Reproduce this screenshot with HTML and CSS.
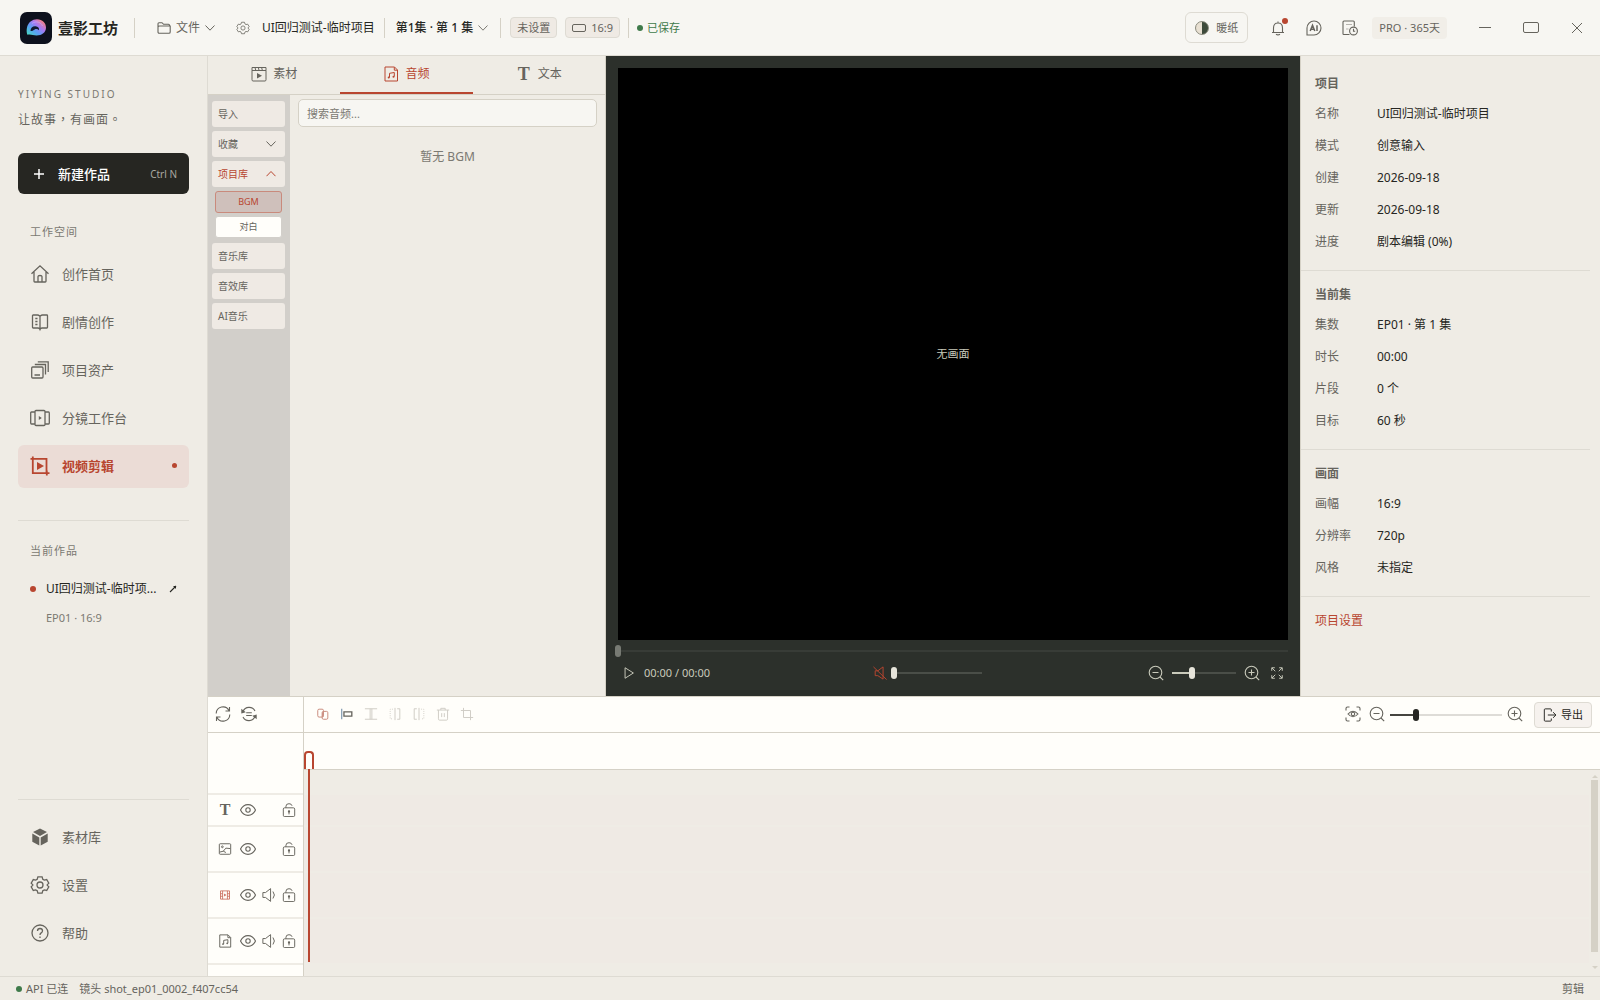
FILE: index.html
```html
<!DOCTYPE html>
<html lang="zh-CN">
<head>
    <meta charset="UTF-8">
    <meta name="viewport" content="width=device-width, initial-scale=1.0">
    <title>壹影工坊</title>
    <link rel="stylesheet" href="styles.css">
</head>
<body>
    <!-- 图标 -->
    <svg class="sprite" aria-hidden="true">
        <symbol id="i-down" viewBox="0 0 10 10"><path d="M0.5 2.5 5 7.2 9.5 2.5"/></symbol>
        <symbol id="i-up" viewBox="0 0 10 10"><path d="M0.5 7.2 5 2.5 9.5 7.2"/></symbol>
        <symbol id="i-folder" viewBox="0 0 14 14"><path d="M1 11V2.8Q1 1.7 2 1.7H5L6.6 3.3H11.5Q12.5 3.3 12.5 4.3V5M2.5 5H13.2V11Q13.2 12.3 12 12.3H2.2Q1 12.3 1 11V6.2Q1 5 2.5 5Z"/></symbol>
        <symbol id="i-gear" viewBox="0 0 20 20"><path d="M7.9 1.8h4.2l.7 2.4 1.5.9 2.4-.6 2.1 3.6-1.7 1.8v.2l1.7 1.8-2.1 3.6-2.4-.6-1.5.9-.7 2.4H7.9l-.7-2.4-1.5-.9-2.4.6-2.1-3.6 1.7-1.8v-.2L1.2 8.1l2.1-3.6 2.4.6 1.5-.9z"/><circle cx="10" cy="10" r="3"/></symbol>
        <symbol id="i-bell" viewBox="0 0 16 16"><path d="M2 12.5H14M3.5 12.5V8Q3.5 3 8 3T12.5 8V12.5M8 3V1.500M6 14.2Q8 15.500 10 14.2"/></symbol>
        <symbol id="i-ai" viewBox="0 0 16 16"><path d="M1 15V8A7 7 0 1 1 8 15Z"/><path class="heavy" d="M4.2 11 6.5 5.2 8.8 11M5 9.3H8M11 5.2V11"/></symbol>
        <symbol id="i-docclock" viewBox="0 0 16 16"><path d="M7.5 14.5H1.7Q1 14.5 1 13.8V2Q1 1 2 1H11.3Q12.3 1 12.3 2V6.500"/><path opacity=".45" d="M4 4.5H10M4 9H6.500"/><circle cx="11.5" cy="11" r="3.9"/><path d="M11.5 8.8V11.3H13.2"/></symbol>
        <symbol id="i-home" viewBox="0 0 20 20"><path d="M1.5 9.7 10 1.8 18.5 9.7M4 8V17.2Q4 18 4.8 18H15.2Q16 18 16 17.2V8M8 18V12.5Q8 11.5 10 11.5T12 12.5V18"/></symbol>
        <symbol id="i-book" viewBox="0 0 20 20"><path d="M10 4.2V17.8M10 4.2Q8.5 3 7.5 3H3.2Q2.5 3 2.5 3.7V15.3Q2.5 16 3.2 16H8Q9.5 16.2 10 17.5 10.5 16.2 12 16H16.8Q17.5 16 17.5 15.3V3.7Q17.5 3 16.8 3H12.5Q11.5 3 10 4.2M5.3 6.5H7.5M5.3 9.5H7.5M5.3 12.5H7.5"/></symbol>
        <symbol id="i-stack" viewBox="0 0 20 20"><path d="M1.7 8Q1.7 7 2.7 7H12Q13 7 13 8V17Q13 18 12 18H2.7Q1.7 18 1.7 17ZM4.5 15H10M4.8 4.5H15.5V14.5M7.8 1.8H18.2V12"/></symbol>
        <symbol id="i-board" viewBox="0 0 20 20"><path d="M5 3.5Q5 2.5 6 2.5H14Q15 2.5 15 3.5V16.5Q15 17.5 14 17.5H6Q5 17.5 5 16.5ZM5 4H1.5Q.7 4 .7 5V15Q.7 16 1.5 16H5M15 4H18.5Q19.3 4 19.3 5V15Q19.3 16 18.5 16H15"/><path class="solid" d="M8.8 8 11.8 10 8.8 12Z"/></symbol>
        <symbol id="i-edit" viewBox="0 0 20 20"><path d="M.5 2.8H16.5V16.8M2.8 .5V17.2H19.5M16.8 14.5V19.5"/><path class="solid" d="M7 6V14L14 10Z"/></symbol>
        <symbol id="i-cube" viewBox="0 0 20 20"><path class="solid" d="M10 1.5 17 5 10 9 3 5ZM2.3 6.500 9.3 10.5V18.5L2.3 14.8ZM17.7 6.5 10.7 10.5V18.5L17.7 14.8Z"/></symbol>
        <symbol id="i-help" viewBox="0 0 20 20"><circle cx="10" cy="10" r="8"/><path d="M7.5 8Q7.5 5.5 10 5.5T12.5 7.8Q12.5 9.2 11.2 9.9 10 10.6 10 12M10 13.5V15"/></symbol>
        <symbol id="i-clip" viewBox="0 0 16 16"><path d="M1 4.5V13.7Q1 15 2 15H14Q15 15 15 13.7V4.5ZM1 4.5V1.5H15V4.5M4 1.5 4.8 4.5M7.3 1.5 8.1 4.5M10.6 1.5 11.4 4.5"/><path class="solid" d="M6 7 11 9.7 6 12.4Z"/></symbol>
        <symbol id="i-music" viewBox="0 0 16 16"><path d="M2 1H11.5L14.5 4V15H2ZM11.3 1.2V4.2H14.3M6.5 11.5V7.3L11.3 6.5V10.5"/><circle class="solid" cx="5.7" cy="11.5" r="1"/><circle class="solid" cx="10.5" cy="10.7" r="1"/></symbol>
        <symbol id="i-play" viewBox="0 0 16 16"><path d="M3.5 2V14L13 8Z"/></symbol>
        <symbol id="i-mute" viewBox="0 0 16 16"><path d="M2.5 5.5V11H5.5L11.5 15V1L5.5 5.5ZM.5 1 15.5 15.5"/></symbol>
        <symbol id="i-minus" viewBox="0 0 16 16"><circle cx="7.5" cy="7.5" r="6.3"/><path d="M4.5 7.5H10.5M12 12 15.2 15.2"/></symbol>
        <symbol id="i-plus" viewBox="0 0 16 16"><circle cx="7.5" cy="7.5" r="6.3"/><path d="M4.5 7.5H10.5M7.5 4.5V10.5M12 12 15.2 15.2"/></symbol>
        <symbol id="i-full" viewBox="0 0 16 16"><path d="M2 5.5V2H5.5M2.2 2.2 6 6M10.5 2H14V5.5M13.8 2.2 10 6M2 10.5V14H5.5M2.2 13.8 6 10M14 10.5V14H10.5M13.8 13.8 10 10"/></symbol>
        <symbol id="i-refresh" viewBox="0 0 16 16"><path d="M1.2 7.5A6.8 6.8 0 0 1 14 4.5M14.5 1V5H10.5M14.8 8.5A6.8 6.8 0 0 1 2 11.5M1.5 15V11H5.5"/></symbol>
        <symbol id="i-sync" viewBox="0 0 16 16"><path d="M2 5.5A6.6 6.6 0 0 1 14 5M14 10.5A6.6 6.6 0 0 1 2 11M5.2 6.8H10.8M5.2 9.5H10.8"/><path class="solid" d="M.3 2.8 4.8 6.300 .3 7.5ZM15.7 13.2 11.2 9.7 15.7 8.5Z"/></symbol>
        <symbol id="i-link" viewBox="0 0 16 16"><rect x="2" y="2.5" width="6.5" height="9" rx="1.5"/><rect x="7" y="5" width="6.5" height="9" rx="1.5"/><path class="heavy" d="M7.8 6V11"/></symbol>
        <symbol id="i-align" viewBox="0 0 16 16"><path stroke="#5f7f9c" d="M2 2V14"/><path class="heavy" d="M4.5 5.5H13.5V10.5H4.5Z"/></symbol>
        <symbol id="i-split" viewBox="0 0 16 16"><path d="M1 2H15M1 14H15M7 2V14M9 2V14"/></symbol>
        <symbol id="i-cutl" viewBox="0 0 16 16"><path d="M10.5 2H13.5V14H10.5M8 1V15"/><path stroke-dasharray="1 1.5" d="M5.5 2.5H2.5V13.5H5.5"/></symbol>
        <symbol id="i-cutr" viewBox="0 0 16 16"><path d="M5.5 2H2.5V14H5.5M8 1V15"/><path stroke-dasharray="1 1.5" d="M10.5 2.5H13.5V13.5H10.5"/></symbol>
        <symbol id="i-trash" viewBox="0 0 16 16"><path d="M1 3.5H15M5.5 3.5V1.5H10.5V3.5M2.8 3.5V13.5Q2.8 15 4 15H12Q13.2 15 13.2 13.5V3.5M6.5 7V11.5M9.5 7V11.5"/></symbol>
        <symbol id="i-crop" viewBox="0 0 16 16"><path d="M1 4H12V15M4 1V12H15"/></symbol>
        <symbol id="i-focus" viewBox="0 0 16 16"><path d="M1 4.5V2.5Q1 1 2.5 1H4.5M11.5 1H13.5Q15 1 15 2.5V4.5M15 11.5V13.5Q15 15 13.5 15H11.5M4.5 15H2.5Q1 15 1 13.5V11.5M3 8Q8 2.500 13 8 8 13.5 3 8Z"/><circle cx="8" cy="8" r="1.7"/></symbol>
        <symbol id="i-export" viewBox="0 0 16 16"><path d="M9.5 4V2Q9.5 1 8.5 1H2.5Q1.5 1 1.5 2V14Q1.5 15 2.5 15H8.5Q9.5 15 9.5 14V12M5.5 8H14.8M11.5 4.8 14.8 8 11.5 11.2"/></symbol>
        <symbol id="i-eye" viewBox="0 0 16 16"><path d="M.5 8C4 .8 12 .8 15.5 8 12 15.2 4 15.2 .5 8Z"/><circle cx="8" cy="8" r="2.2"/></symbol>
        <symbol id="i-sound" viewBox="0 0 16 16"><path d="M1 5.2V10.800H4L9.800 15.300V.7L4 5.2ZM12.500 4Q15.800 8 12.500 12"/></symbol>
        <symbol id="i-lock" viewBox="0 0 16 16"><rect x="1.5" y="5.500" width="13" height="10" rx="1.5"/><path d="M4.5 5.5V3.8Q4.5.8 8 .8 11 .8 11.500 3.2M8 9V13"/><circle class="solid" cx="8" cy="9.7" r="1.3"/></symbol>
        <symbol id="i-image" viewBox="0 0 16 16"><rect x="1.5" y="2" width="13" height="12" rx="1"/><path d="M2 11.5 6 10.5 9 7 14 7.5M6 10.5 9 12"/><circle cx="5" cy="5.5" r="1"/></symbol>
        <symbol id="i-film" viewBox="0 0 16 16"><path d="M2 2.500H14V13.500H2ZM4.8 2.500V13.500M11.2 2.500V13.500M2 6.3H4.8M2 9.7H4.8M11.2 6.3H14M11.2 9.7H14"/><path class="solid" d="M6.8 6 9.8 8 6.8 10Z"/></symbol>
    </svg>

    <!-- 顶栏 -->
    <header class="topbar">
        <div class="brand">
            <svg class="logo" viewBox="0 0 32 32" aria-hidden="true">
                <defs>
                    <linearGradient id="ring" x1="0" y1="1" x2="1" y2="0">
                        <stop offset="0" stop-color="#43e0b8"/>
                        <stop offset=".35" stop-color="#5aa0f5"/>
                        <stop offset=".6" stop-color="#a879f2"/>
                        <stop offset=".85" stop-color="#f0808c"/>
                        <stop offset="1" stop-color="#e85a4a"/>
                    </linearGradient>
                </defs>
                <rect width="32" height="32" rx="7" fill="#0d111d"/>
                <path fill="url(#ring)" d="M7.500 22.800C5.500 18 7 7.500 17 7.200c5.500 0 9 3.800 9 8.300 0 4.800-4 8-9.500 8-3.500 0-5.500-1.500-9 -.700Z"/>
                <path fill="#101830" d="M10.500 19c0-3.500 2.200-5 5-4.800 2.600.2 4 1.800 3.500 4-1.300-1.300-2.800-1.500-4.300-.800-1.200.600-2.200 1.800-4.200 1.600Z"/>
                <path fill="none" stroke="#c9b6ff" stroke-width=".8" opacity=".7" d="M12 11.500C16 8.500 21 10 22.500 14"/>
            </svg>
            <span>壹影工坊</span>
        </div>
        <span class="divider"></span>
        <button type="button" class="plain file-menu"><svg class="icon s14"><use href="#i-folder"/></svg>文件<svg class="icon s10"><use href="#i-down"/></svg></button>
        <button type="button" class="plain" aria-label="项目设置"><svg class="icon s14"><use href="#i-gear"/></svg></button>
        <span class="project-name">UI回归测试-临时项目</span>
        <span class="divider"></span>
        <button type="button" class="plain episode">第1集 · 第 1 集<svg class="icon s10"><use href="#i-down"/></svg></button>
        <span class="divider"></span>
        <button type="button" class="tag">未设置</button>
        <button type="button" class="tag last"><span class="ratio"></span>16:9</button>
        <span class="divider tight"></span>
        <span class="saved"><i class="dot green"></i>已保存</span>

        <div class="topbar-right">
            <button type="button" class="theme"><i class="half"></i>暖纸</button>
            <button type="button" class="plain bell" aria-label="通知"><svg class="icon s16"><use href="#i-bell"/></svg><i class="badge"></i></button>
            <button type="button" class="plain" aria-label="AI"><svg class="icon s16"><use href="#i-ai"/></svg></button>
            <button type="button" class="plain" aria-label="任务记录"><svg class="icon s16"><use href="#i-docclock"/></svg></button>
            <span class="pro">PRO · 365天</span>
            <button type="button" class="plain win" aria-label="最小化"><i class="win-min"></i></button>
            <button type="button" class="plain win" aria-label="最大化"><i class="win-max"></i></button>
            <button type="button" class="plain win" aria-label="关闭"><svg class="icon s10" viewBox="0 0 10 10"><path d="M0 0 10 10M10 0 0 10"/></svg></button>
        </div>
    </header>

    <div class="layout">
        <!-- 侧栏 -->
        <aside class="sidebar">
            <div class="studio">YIYING STUDIO</div>
            <div class="slogan" lang="zh-TW">让故事，有画面。</div>
            <button type="button" class="new-work"><svg class="icon s12" viewBox="0 0 12 12"><path d="M6 1V11M1 6H11"/></svg>新建作品<kbd>Ctrl N</kbd></button>

            <div class="side-title">工作空间</div>
            <nav class="nav">
                <a href="#"><svg class="icon s20"><use href="#i-home"/></svg>创作首页</a>
                <a href="#"><svg class="icon s20"><use href="#i-book"/></svg>剧情创作</a>
                <a href="#"><svg class="icon s20"><use href="#i-stack"/></svg>项目资产</a>
                <a href="#"><svg class="icon s20"><use href="#i-board"/></svg>分镜工作台</a>
                <a href="#" class="active"><svg class="icon s20"><use href="#i-edit"/></svg>视频剪辑<i class="dot"></i></a>
            </nav>

            <div class="current">
                <div class="side-title">当前作品</div>
                <a href="#" class="current-work" title="UI回归测试-临时项目"><i class="dot"></i><span>UI回归测试-临时项...</span><svg class="icon s8" viewBox="0 0 8 8"><path d="M1 7 7 1"/><path class="solid" d="M4 1H7V4Z"/></svg></a>
                <div class="current-meta">EP01 · 16:9</div>
            </div>

            <nav class="nav nav-bottom">
                <a href="#"><svg class="icon s20"><use href="#i-cube"/></svg>素材库</a>
                <a href="#"><svg class="icon s20"><use href="#i-gear"/></svg>设置</a>
                <a href="#"><svg class="icon s20"><use href="#i-help"/></svg>帮助</a>
            </nav>
        </aside>

        <main class="workspace">
            <div class="upper">
                <!-- 素材面板 -->
                <section class="library">
                    <div class="tabs">
                        <button type="button"><svg class="icon s16"><use href="#i-clip"/></svg>素材</button>
                        <button type="button" class="active"><svg class="icon s16"><use href="#i-music"/></svg>音频</button>
                        <button type="button"><b class="letter">T</b>文本</button>
                    </div>
                    <div class="library-body">
                        <div class="cats">
                            <button type="button" class="cat">导入</button>
                            <button type="button" class="cat">收藏<svg class="icon s10"><use href="#i-down"/></svg></button>
                            <button type="button" class="cat active">项目库<svg class="icon s10"><use href="#i-up"/></svg></button>
                            <div class="subcats">
                                <button type="button" class="active">BGM</button>
                                <button type="button">对白</button>
                            </div>
                            <button type="button" class="cat">音乐库</button>
                            <button type="button" class="cat">音效库</button>
                            <button type="button" class="cat">AI音乐</button>
                        </div>
                        <div class="assets">
                            <input type="text" class="search" placeholder="搜索音频..." aria-label="搜索音频">
                            <p class="empty">暂无 BGM</p>
                        </div>
                    </div>
                </section>

                <!-- 预览 -->
                <section class="preview">
                    <div class="screen">无画面</div>
                    <input type="range" class="seek" min="0" max="100" value="0" aria-label="播放进度">
                    <div class="controls">
                        <div class="ctl">
                            <button type="button" class="plain" aria-label="播放"><svg class="icon s14"><use href="#i-play"/></svg></button>
                            <span class="time">00:00 / 00:00</span>
                        </div>
                        <div class="ctl volume">
                            <button type="button" class="plain muted" aria-label="静音"><svg class="icon s14"><use href="#i-mute"/></svg></button>
                            <input type="range" min="0" max="100" value="0" aria-label="音量">
                        </div>
                        <div class="ctl zoom">
                            <button type="button" class="plain" aria-label="缩小"><svg class="icon s16"><use href="#i-minus"/></svg></button>
                            <input type="range" min="0" max="100" value="32" aria-label="画面缩放">
                            <button type="button" class="plain" aria-label="放大"><svg class="icon s16"><use href="#i-plus"/></svg></button>
                            <button type="button" class="plain" aria-label="全屏"><svg class="icon s14"><use href="#i-full"/></svg></button>
                        </div>
                    </div>
                </section>

                <!-- 项目信息 -->
                <aside class="inspector">
                    <section>
                        <h2>项目</h2>
                        <dl>
                            <dt>名称</dt><dd>UI回归测试-临时项目</dd>
                            <dt>模式</dt><dd>创意输入</dd>
                            <dt>创建</dt><dd>2026-09-18</dd>
                            <dt>更新</dt><dd>2026-09-18</dd>
                            <dt>进度</dt><dd>剧本编辑 (0%)</dd>
                        </dl>
                    </section>
                    <section>
                        <h2>当前集</h2>
                        <dl>
                            <dt>集数</dt><dd>EP01 · 第 1 集</dd>
                            <dt>时长</dt><dd>00:00</dd>
                            <dt>片段</dt><dd>0 个</dd>
                            <dt>目标</dt><dd>60 秒</dd>
                        </dl>
                    </section>
                    <section>
                        <h2>画面</h2>
                        <dl>
                            <dt>画幅</dt><dd>16:9</dd>
                            <dt>分辨率</dt><dd>720p</dd>
                            <dt>风格</dt><dd>未指定</dd>
                        </dl>
                    </section>
                    <a href="#" class="settings-link">项目设置</a>
                </aside>
            </div>

            <!-- 时间线 -->
            <section class="timeline">
                <div class="toolbar">
                    <div class="tools-left">
                        <button type="button" class="plain" aria-label="刷新"><svg class="icon s16"><use href="#i-refresh"/></svg></button>
                        <button type="button" class="plain" aria-label="同步"><svg class="icon s16"><use href="#i-sync"/></svg></button>
                    </div>
                    <div class="tools">
                        <button type="button" class="plain linked" aria-label="联动"><svg class="icon s14"><use href="#i-link"/></svg></button>
                        <button type="button" class="plain" aria-label="吸附"><svg class="icon s14"><use href="#i-align"/></svg></button>
                        <button type="button" class="plain" disabled aria-label="分割"><svg class="icon s14"><use href="#i-split"/></svg></button>
                        <button type="button" class="plain" disabled aria-label="向左裁剪"><svg class="icon s14"><use href="#i-cutl"/></svg></button>
                        <button type="button" class="plain" disabled aria-label="向右裁剪"><svg class="icon s14"><use href="#i-cutr"/></svg></button>
                        <button type="button" class="plain" disabled aria-label="删除"><svg class="icon s14"><use href="#i-trash"/></svg></button>
                        <button type="button" class="plain" disabled aria-label="裁切"><svg class="icon s14"><use href="#i-crop"/></svg></button>
                    </div>
                    <div class="tools-right">
                        <button type="button" class="plain" aria-label="定位"><svg class="icon s16"><use href="#i-focus"/></svg></button>
                        <button type="button" class="plain" aria-label="缩小时间线"><svg class="icon s16"><use href="#i-minus"/></svg></button>
                        <input type="range" min="0" max="100" value="23" aria-label="时间线缩放">
                        <button type="button" class="plain" aria-label="放大时间线"><svg class="icon s16"><use href="#i-plus"/></svg></button>
                        <button type="button" class="export"><svg class="icon s14"><use href="#i-export"/></svg>导出</button>
                    </div>
                </div>
                <div class="tracks">
                    <div class="heads">
                        <div class="heads-top"></div>
                        <div class="head short">
                            <b class="letter">T</b>
                            <button type="button" class="plain" aria-label="显示"><svg class="icon s16"><use href="#i-eye"/></svg></button>
                            <span></span>
                            <button type="button" class="plain" aria-label="锁定"><svg class="icon s14"><use href="#i-lock"/></svg></button>
                        </div>
                        <div class="head">
                            <svg class="icon s14"><use href="#i-image"/></svg>
                            <button type="button" class="plain" aria-label="显示"><svg class="icon s16"><use href="#i-eye"/></svg></button>
                            <span></span>
                            <button type="button" class="plain" aria-label="锁定"><svg class="icon s14"><use href="#i-lock"/></svg></button>
                        </div>
                        <div class="head">
                            <svg class="icon s12 red"><use href="#i-film"/></svg>
                            <button type="button" class="plain" aria-label="显示"><svg class="icon s16"><use href="#i-eye"/></svg></button>
                            <button type="button" class="plain" aria-label="静音"><svg class="icon s14"><use href="#i-sound"/></svg></button>
                            <button type="button" class="plain" aria-label="锁定"><svg class="icon s14"><use href="#i-lock"/></svg></button>
                        </div>
                        <div class="head">
                            <svg class="icon s14"><use href="#i-music"/></svg>
                            <button type="button" class="plain" aria-label="显示"><svg class="icon s16"><use href="#i-eye"/></svg></button>
                            <button type="button" class="plain" aria-label="静音"><svg class="icon s14"><use href="#i-sound"/></svg></button>
                            <button type="button" class="plain" aria-label="锁定"><svg class="icon s14"><use href="#i-lock"/></svg></button>
                        </div>
                    </div>
                    <div class="canvas">
                        <div class="ruler"></div>
                        <div class="lanes-row">
                            <div class="lanes">
                                <div class="lane short"></div>
                                <div class="lane"></div>
                                <div class="lane"></div>
                                <div class="lane"></div>
                            </div>
                            <div class="scrollbar">
                                <i class="arrow-up"></i>
                                <i class="thumb"></i>
                                <i class="arrow-down"></i>
                            </div>
                        </div>
                        <div class="playhead"></div>
                    </div>
                </div>
            </section>
        </main>
    </div>

    <!-- 状态栏 -->
    <footer class="statusbar">
        <span><i class="dot green"></i>API 已连</span>
        <span>镜头 shot_ep01_0002_f407cc54</span>
        <span class="mode">剪辑</span>
    </footer>
</body>
</html>
```
FILE: styles.css
```css
:root {
    --paper: #efece5;
    --light: #f7f6f2;
    --white: #fffefa;
    --soft: #efeae4;
    --line: #dedbd3;
    --line-dark: #d5d1c6;
    --ink: #262622;
    --text: #66645d;
    --muted: #7b7972;
    --red: #b84630;
    --green: #3f7a4a;
}

* {
    box-sizing: border-box;
}

body {
    margin: 0;
    height: 100vh;
    display: flex;
    flex-direction: column;
    overflow: hidden;
    background: var(--paper);
    color: var(--text);
    font-family: "Noto Sans", "Noto Sans CJK SC", sans-serif;
    font-size: 12px;
    line-height: 20px;
}

button, input {
    font: inherit;
    color: inherit;
}

button {
    display: flex;
    align-items: center;
    padding: 0;
    cursor: pointer;
    white-space: nowrap;
}

a {
    color: inherit;
    text-decoration: none;
}

.plain {
    border: none;
    background: none;
}

/* 图标 */
.sprite {
    position: absolute;
    width: 0;
    height: 0;
}

.icon {
    flex: none;
    fill: none;
    stroke: currentColor;
    stroke-width: 1.1;
    overflow: visible;
}

.solid {
    fill: currentColor;
    stroke: none;
}

.heavy {
    stroke-width: 1.5;
}

.s8 { width: 8px; height: 8px; }
.s10 { width: 10px; height: 10px; stroke-width: 1; }
.s12 { width: 12px; height: 12px; }
.s14 { width: 14px; height: 14px; }
.s16 { width: 16px; height: 16px; }
.s20 { width: 20px; height: 20px; stroke-width: 1.3; }

.red { color: #c96a58; }

.dot {
    flex: none;
    width: 6px;
    height: 6px;
    border-radius: 50%;
    background: var(--red);
}

.dot.green {
    background: var(--green);
}

.letter {
    width: 16px;
    font-family: "Liberation Serif", serif;
    font-size: 18px;
    text-align: center;
}

/* 顶栏 */
.topbar {
    flex: none;
    height: 56px;
    display: flex;
    align-items: center;
    padding: 0 15px 0 20px;
    background: var(--light);
    border-bottom: 1px solid var(--line);
}

.brand {
    display: flex;
    align-items: center;
    gap: 6px;
    color: var(--ink);
    font-size: 15px;
    font-weight: 600;
}

.logo {
    width: 32px;
    height: 32px;
}

.divider {
    width: 1px;
    height: 20px;
    margin: 0 11px 0 9px;
    background: var(--line-dark);
}

.divider.tight {
    margin: 0 8px;
}

.brand + .divider {
    margin: 0 22px 0 16px;
}

.file-menu {
    gap: 5px;
    margin-right: 21px;
}

.project-name {
    margin-left: 12px;
    color: var(--ink);
}

.episode {
    gap: 5px;
    margin-right: 3px;
    color: var(--ink);
    font-weight: 500;
}

.episode .icon {
    color: var(--muted);
}

.tag {
    height: 21px;
    margin-right: 8px;
    padding: 0 6px;
    gap: 5px;
    border: 1px solid var(--line);
    border-radius: 4px;
    background: var(--soft);
    font-size: 11px;
}

.divider + .tag {
    margin-left: -2px;
}

.tag.last {
    margin-right: 0;
}

.ratio {
    width: 14px;
    height: 8px;
    border: 1px solid var(--text);
    border-radius: 2px;
}

.saved {
    display: flex;
    align-items: center;
    gap: 4px;
    color: var(--green);
    font-size: 11px;
}

.topbar-right {
    display: flex;
    align-items: center;
    margin-left: auto;
    gap: 20px;
}

.theme {
    height: 31px;
    padding: 0 9px;
    gap: 7px;
    border: 1px solid var(--line);
    border-radius: 6px;
    background: none;
    font-size: 11px;
}

.half {
    width: 14px;
    height: 14px;
    border: 1px solid #8a8a7c;
    border-radius: 50%;
    background: linear-gradient(90deg, #e8e0d2 50%, #3d4a3a 50%);
}

.bell {
    position: relative;
    margin-left: 2px;
}

.badge {
    position: absolute;
    top: -2px;
    right: -2px;
    width: 6px;
    height: 6px;
    border-radius: 50%;
    background: var(--red);
}

.pro {
    margin: 0 0 0 -6px;
    padding: 1px 7px;
    border-radius: 4px;
    background: #f1eee8;
    font-size: 11px;
}

.win {
    width: 16px;
    height: 16px;
    margin-left: 10px;
    justify-content: center;
}

.win-min {
    width: 12px;
    height: 1px;
    background: var(--text);
}

.win-max {
    width: 16px;
    height: 11px;
    border: 1px solid var(--text);
    border-radius: 2px;
}

.layout {
    flex: 1;
    min-height: 0;
    display: flex;
}

/* 侧栏 */
.sidebar {
    flex: none;
    width: 208px;
    display: flex;
    flex-direction: column;
    padding: 28px 18px 21px;
    border-right: 1px solid var(--line);
}

.studio {
    font-size: 10px;
    letter-spacing: 2px;
    color: var(--muted);
}

.slogan {
    margin-top: 5px;
    font-family: "Noto Sans CJK TC", sans-serif;
    letter-spacing: 1px;
}

.new-work {
    flex: none;
    height: 41px;
    margin-top: 24px;
    padding: 0 12px 0 15px;
    border: none;
    border-radius: 6px;
    background: var(--ink);
    color: #fff;
    font-size: 13px;
    font-weight: 500;
}

.new-work .icon {
    margin-right: 13px;
    stroke-width: 1.5;
}

.new-work kbd {
    margin-left: auto;
    color: #aaa8a0;
    font-family: inherit;
    font-size: 10px;
    font-weight: 400;
}

.side-title {
    margin: 28px 12px 11px;
    color: var(--muted);
    font-size: 11px;
    letter-spacing: 1px;
}

.nav {
    display: flex;
    flex-direction: column;
    gap: 5px;
}

.nav a {
    height: 43px;
    display: flex;
    align-items: center;
    gap: 12px;
    padding: 0 12px 2px;
    border-radius: 6px;
    font-size: 13px;
}

.nav a.active {
    background: #ebdcd6;
    color: var(--red);
    font-weight: 600;
}

.nav a.active .icon {
    stroke-width: 1.8;
}

.nav .dot {
    width: 5px;
    height: 5px;
    margin-left: auto;
}

.current {
    margin-top: 32px;
    border-top: 1px solid var(--line);
}

.current .side-title {
    margin-top: 20px;
    margin-bottom: 18px;
}

.current-work {
    display: flex;
    align-items: center;
    padding: 0 12px;
    color: var(--ink);
}

.current-work span {
    flex: 1;
    margin-left: 10px;
    white-space: nowrap;
}

.current-meta {
    margin: 9px 28px;
    color: var(--muted);
    font-size: 11px;
}

.nav-bottom {
    margin-top: auto;
    padding-top: 16px;
    border-top: 1px solid var(--line);
}

/* 工作区 */
.workspace {
    flex: 1;
    min-width: 0;
    display: flex;
    flex-direction: column;
}

.upper {
    flex: 1;
    min-height: 0;
    display: flex;
}

/* 素材面板 */
.library {
    flex: none;
    width: 398px;
    display: flex;
    flex-direction: column;
    border-right: 1px solid var(--line-dark);
}

.tabs {
    flex: none;
    height: 39px;
    display: grid;
    grid-template-columns: repeat(3, 1fr);
    border-bottom: 1px solid var(--line-dark);
}

.tabs button {
    justify-content: center;
    gap: 6px;
    border: none;
    border-bottom: 2px solid transparent;
    background: none;
}

.tabs .active {
    border-bottom-color: var(--red);
    color: var(--red);
}

.tabs .icon {
    stroke-width: 1;
}

.library-body {
    flex: 1;
    display: flex;
}

.cats {
    width: 82px;
    display: flex;
    flex-direction: column;
    gap: 4px;
    padding: 6px 5px 6px 4px;
    background: #d2cfca;
}

.cat {
    height: 26px;
    justify-content: space-between;
    padding: 0 9px 0 6px;
    border: none;
    border-radius: 3px;
    background: var(--soft);
    font-size: 10px;
}

.cat.active {
    color: var(--red);
}

.subcats {
    display: flex;
    flex-direction: column;
    gap: 3px;
    padding: 0 3px 1px;
}

.subcats button {
    height: 22px;
    justify-content: center;
    border: 1px solid #d2cfca;
    border-radius: 3px;
    background: var(--white);
    font-size: 9px;
}

.subcats .active {
    border-color: #c98a7c;
    background: #cfc0bb;
    color: var(--red);
}

.assets {
    flex: 1;
    padding: 4px 8px;
}

.search {
    width: 100%;
    height: 28px;
    padding: 1px 8px 0;
    border: 1px solid var(--line-dark);
    border-radius: 5px;
    background: var(--light);
    font-size: 11px;
}

.search::placeholder {
    color: var(--muted);
}

.empty {
    margin: 20px 0;
    color: var(--muted);
    text-align: center;
}

/* 滑块 */
input[type="range"] {
    --track: #4a4e48;
    --fill: #4a4e48;
    --thumb: #e6e4da;
    --pos: 0%;
    flex: none;
    height: 12px;
    margin: 0;
    background: none;
    -webkit-appearance: none;
    appearance: none;
}

input[type="range"]::-webkit-slider-runnable-track {
    height: 12px;
    background: linear-gradient(90deg, var(--fill) var(--pos), var(--track) var(--pos)) center / calc(100% - 6px) 2px no-repeat;
}

input[type="range"]::-webkit-slider-thumb {
    -webkit-appearance: none;
    width: 6px;
    height: 12px;
    border-radius: 3px;
    background: var(--thumb);
}

/* 预览 */
.preview {
    flex: 1;
    min-width: 0;
    display: flex;
    flex-direction: column;
    padding: 12px 12px 0;
    background: #2c302b;
    color: #c9cabb;
}

.screen {
    flex: 1;
    display: flex;
    align-items: center;
    justify-content: center;
    background: #000;
    font-size: 11px;
}

.preview .seek {
    --track: #383c37;
    --thumb: #777a73;
    margin: 5px -3px 3px;
}

.controls {
    height: 36px;
    display: flex;
    align-items: center;
    justify-content: space-between;
    padding: 0 4px 10px;
}

.ctl {
    display: flex;
    align-items: center;
    gap: 8px;
}

.time {
    font-size: 11px;
}

.volume {
    gap: 4px;
}

.volume input {
    width: 94px;
}

.muted {
    color: var(--red);
}

.zoom input {
    --fill: #c9cabb;
    --pos: 32%;
    width: 70px;
    margin: 0 -3px;
}

.zoom button:last-child {
    margin-left: 2px;
}

/* 项目信息 */
.inspector {
    flex: none;
    width: 300px;
    padding: 4px 10px 0 0;
    border-left: 1px solid var(--line-dark);
}

.inspector section {
    padding: 14px 14px 12px;
    border-bottom: 1px solid var(--line);
}

.inspector h2 {
    margin: 0 0 4px;
    font-size: 12px;
    font-weight: 600;
    line-height: 20px;
}

.inspector dl {
    display: grid;
    grid-template-columns: 62px 1fr;
    margin: 0;
    line-height: 32px;
}

.inspector dd {
    margin: 0;
    color: var(--ink);
}

.settings-link {
    display: block;
    padding: 14px;
    color: var(--red);
}

/* 时间线 */
.timeline {
    flex: none;
    height: 280px;
    display: flex;
    flex-direction: column;
    border-top: 1px solid var(--line-dark);
    background: var(--white);
}

.toolbar {
    flex: none;
    height: 36px;
    display: flex;
    border-bottom: 1px solid var(--line-dark);
}

.toolbar > div {
    display: flex;
    align-items: center;
}

.toolbar .plain {
    padding-bottom: 2px;
}

.tools-left {
    width: 96px;
    gap: 10px;
    padding-left: 7px;
    border-right: 1px solid var(--line-dark);
}

.tools {
    gap: 10px;
    padding-left: 12px;
}

.tools button:disabled {
    color: #cfccc5;
}

.linked {
    color: #c98a7c;
}

.tools-right {
    margin-left: auto;
    gap: 8px;
    padding-right: 8px;
}

.tools-right input {
    --track: #dedcd7;
    --fill: #45443f;
    --thumb: #262622;
    --pos: 23%;
    width: 118px;
    margin: 0 -6px;
}

.export {
    height: 26px;
    margin-left: 3px;
    padding: 0 8px;
    gap: 4px;
    border: 1px solid var(--line);
    border-radius: 4px;
    background: #f6f2ee;
    color: var(--ink);
    font-size: 11px;
}

.tracks {
    flex: 1;
    min-height: 0;
    display: flex;
}

.heads {
    width: 96px;
    border-right: 1px solid var(--line-dark);
}

.heads-top {
    height: 62px;
    border-bottom: 2px solid var(--paper);
}

.head {
    height: 46px;
    display: grid;
    grid-template-columns: 16px 18px 12px 16px;
    gap: 6px;
    align-items: center;
    justify-items: center;
    padding-left: 9px;
    border-bottom: 2px solid var(--paper);
}

.head.short, .lane.short {
    height: 32px;
}

.head .letter {
    font-size: 16px;
}

.canvas {
    position: relative;
    flex: 1;
    display: flex;
    flex-direction: column;
    background: var(--paper);
}

.ruler {
    height: 37px;
    border-bottom: 1px solid var(--line-dark);
    background: var(--white);
}

.lanes-row {
    flex: 1;
    display: flex;
}

.lanes {
    flex: 1;
    padding-top: 25px;
}

.lane {
    height: 46px;
    border-bottom: 2px solid var(--paper);
    background: var(--soft);
}

.scrollbar {
    width: 11px;
    display: flex;
    flex-direction: column;
    align-items: center;
    padding: 5px 2px 7px 2px;
}

.scrollbar .thumb {
    flex: none;
    width: 7px;
    height: 172px;
    margin: 2px 0 auto;
    background: var(--line-dark);
}

.arrow-up, .arrow-down {
    border: 3px solid transparent;
    border-top-width: 0;
    border-bottom: 3px solid var(--line-dark);
}

.arrow-down {
    border-top: 3px solid var(--line-dark);
    border-bottom-width: 0;
}

/* 播放头 */
.playhead {
    position: absolute;
    top: 18px;
    left: 0;
    width: 10px;
    height: 18px;
    border: 2px solid var(--red);
    border-bottom: none;
    border-radius: 4px 4px 0 0;
}

.playhead::after {
    content: "";
    position: absolute;
    top: 16px;
    left: 2px;
    width: 2px;
    height: 193px;
    background: var(--red);
}

/* 状态栏 */
.statusbar {
    flex: none;
    height: 24px;
    display: flex;
    align-items: center;
    gap: 11px;
    padding: 0 16px;
    border-top: 1px solid var(--line);
    font-size: 11px;
}

.statusbar span {
    display: flex;
    align-items: center;
    gap: 4px;
}

.statusbar .mode {
    margin-left: auto;
}
```
